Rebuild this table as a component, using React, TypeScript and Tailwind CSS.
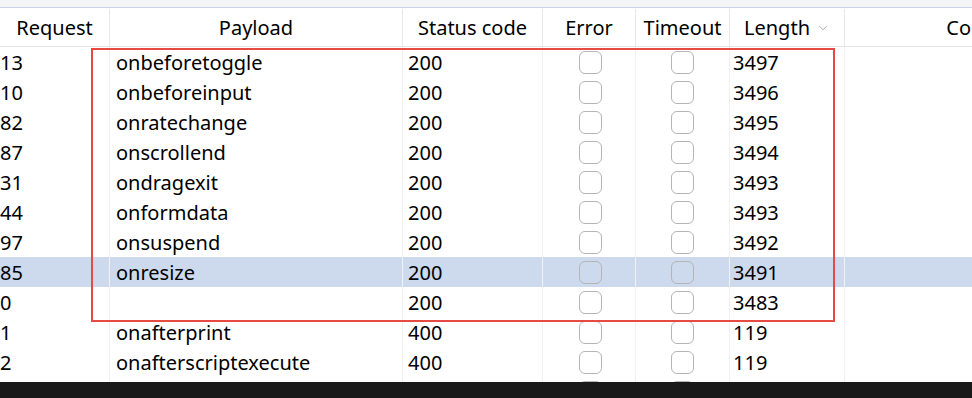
import { ChevronDown } from 'lucide-react'

type Row = {
  req: string
  payload: string
  status: string
  length: string
  selected?: boolean
}

const ROWS: Row[] = [
  { req: '13', payload: 'onbeforetoggle', status: '200', length: '3497' },
  { req: '10', payload: 'onbeforeinput', status: '200', length: '3496' },
  { req: '82', payload: 'onratechange', status: '200', length: '3495' },
  { req: '87', payload: 'onscrollend', status: '200', length: '3494' },
  { req: '31', payload: 'ondragexit', status: '200', length: '3493' },
  { req: '44', payload: 'onformdata', status: '200', length: '3493' },
  { req: '97', payload: 'onsuspend', status: '200', length: '3492' },
  { req: '85', payload: 'onresize', status: '200', length: '3491', selected: true },
  { req: '0', payload: '', status: '200', length: '3483' },
  { req: '1', payload: 'onafterprint', status: '400', length: '119' },
  { req: '2', payload: 'onafterscriptexecute', status: '400', length: '119' },
  // next row is scrolled under the bottom bar, only its checkboxes peek out
  { req: '', payload: '', status: '', length: '' },
]

const COLS = [
  { key: 'req', label: 'Request', w: 'w-[110px]' },
  { key: 'payload', label: 'Payload', w: 'w-[293px]' },
  { key: 'status', label: 'Status code', w: 'w-[140px]' },
  { key: 'error', label: 'Error', w: 'w-[93px]' },
  { key: 'timeout', label: 'Timeout', w: 'w-[94px]' },
  { key: 'length', label: 'Length', w: 'w-[115px]' },
]

function Box() {
  return <div className="h-[23px] w-[23px] rounded-[6px] border-[1.5px] border-[#b5b5b5]" />
}

export default function App() {
  return (
    <div
      className="relative flex h-[398px] w-[972px] flex-col overflow-hidden bg-white text-[20px] text-black"
      style={{ fontFamily: '"Noto Sans", "Open Sans", sans-serif' }}>
      <div className="h-[7px] shrink-0 bg-[#f4f5f7]" />
      <div className="h-px shrink-0 bg-[#c8d4e6]" />

      {/* header */}
      <div className="flex h-[39px] shrink-0 border-b border-[#e3e3e3] pt-px">
        {COLS.map((c) => (
          <div
            key={c.key}
            className={`${c.w} flex shrink-0 items-center justify-center gap-[6px] border-r border-[#e8e8e8]`}>
            <span>{c.label}</span>
            {c.key === 'length' && <ChevronDown size={14} strokeWidth={1.5} className="text-[#9e9e9e]" />}
          </div>
        ))}
        <div className="flex flex-1 items-center justify-end whitespace-nowrap pr-px">
          <span>Co</span>
        </div>
      </div>

      {/* body */}
      <div className="flex-1 overflow-hidden">
        {ROWS.map((r, i) => (
          <div key={i} className={`flex h-[30px] ${r.selected ? 'bg-[#cdd9ec]' : ''}`}>
            <div className="flex w-[110px] shrink-0 items-center border-r border-[#f1f1f1] pt-[2px]">{r.req}</div>
            <div className="flex w-[293px] shrink-0 items-center border-r border-[#f1f1f1] pl-[6px] pt-[2px]">
              {r.payload}
            </div>
            <div className="flex w-[140px] shrink-0 items-center border-r border-[#f1f1f1] pl-[5px] pt-[2px]">
              {r.status}
            </div>
            <div className="flex w-[93px] shrink-0 items-center justify-center border-r border-[#f1f1f1] pl-[2px]">
              <Box />
            </div>
            <div className="flex w-[94px] shrink-0 items-center justify-center border-r border-[#f1f1f1]">
              <Box />
            </div>
            <div className="flex w-[115px] shrink-0 items-center border-r border-[#f1f1f1] pl-[3px] pt-[2px]">
              {r.length}
            </div>
            <div className="flex-1" />
          </div>
        ))}
      </div>

      <div className="h-[16px] shrink-0 bg-[#191919]" />

      {/* red frame around the 200 responses */}
      <div className="pointer-events-none absolute left-[91px] top-[48px] h-[274px] w-[744px] border-2 border-[#e64a42]" />
    </div>
  )
}
